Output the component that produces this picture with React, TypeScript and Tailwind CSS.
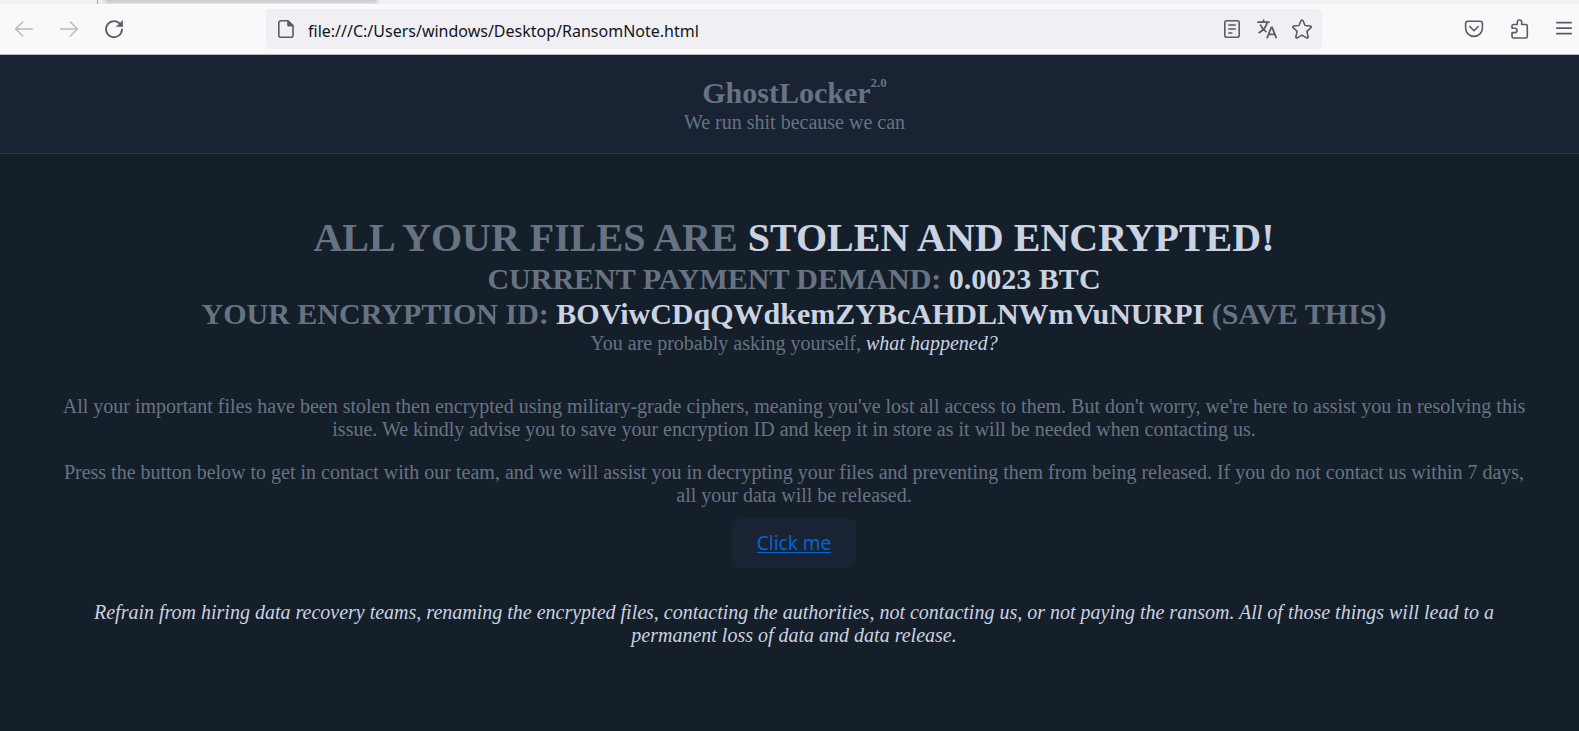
import type { ReactNode } from "react";

function Icon({ children }: { children: ReactNode }) {
  return (
    <svg
      width={20}
      height={20}
      viewBox="0 0 20 20"
      fill="none"
      stroke="currentColor"
      strokeWidth="1.6"
      strokeLinecap="round"
      strokeLinejoin="round"
      aria-hidden="true"
    >
      {children}
    </svg>
  );
}

function TabStrip() {
  return (
    <div className="flex h-1 overflow-hidden bg-[#f0f0f4]">
      <div className="w-[98px] border-r border-[#a9a9b0]" />
      <div className="ml-2 h-px w-[270px] bg-[#cfcfd3] shadow-[0_0_4px_1px_rgba(0,0,0,0.3)]" />
    </div>
  );
}

function Toolbar() {
  return (
    <div className="flex items-center border-b border-[#b8b8bc] bg-[#f9f9fb] py-[5px] pr-[5px] pl-3.5 text-[#5b5b66]">
      <div className="flex w-[252px] shrink-0 gap-[25px]">
        <button type="button" aria-label="Back" className="text-[#bbbbc0]">
          <Icon>
            <path d="M18.3 10H2M8.7 3 1.7 10l7 7" />
          </Icon>
        </button>
        <button type="button" aria-label="Forward" className="text-[#bbbbc0]">
          <Icon>
            <path d="M1.7 10H18M11.3 3l7 7-7 7" />
          </Icon>
        </button>
        <button type="button" aria-label="Reload">
          <Icon>
            <path strokeWidth="1.8" d="M18 10.5A8 8 0 1 1 15.3 4.2" />
            <path d="M18.6 1.8v5.8h-6z" fill="currentColor" strokeWidth="0.6" />
          </Icon>
        </button>
      </div>
      <div className="flex h-10 grow items-center rounded bg-[#f0f0f4] px-2.5">
        <Icon>
          <path d="M4.8 1.8h7.2l5 5v9.4a2 2 0 0 1-2 2H4.8a2 2 0 0 1-2-2V3.8a2 2 0 0 1 2-2z" />
          <path d="M12 2v4.8h5z" fill="currentColor" />
        </Icon>
        <input
          type="text"
          aria-label="Address"
          defaultValue="file:///C:/Users/windows/Desktop/RansomNote.html"
          className="ml-3 min-w-0 grow bg-transparent pt-1 font-['Noto_Sans','Open_Sans',sans-serif] text-[16px] text-[#15141a] outline-none"
        />
        <div className="flex gap-[15px]">
          <button type="button" aria-label="Reader view">
            <Icon>
              <rect x="2.8" y="1.8" width="14.4" height="16.4" rx="2" />
              <path d="M6.8 6h6.4M6.8 10h6.4M6.8 14h3" />
            </Icon>
          </button>
          <button type="button" aria-label="Translate page">
            <Icon>
              <path
                strokeLinecap="butt"
                strokeWidth="1.8"
                d="M.3 3.2h12.4M6.5.4v2.8M10.3 3.2C9.3 7.5 6 11.5 1.5 14M3.2 5.5c1.2 3 3.5 5.8 6.2 7.6M10 19.3l4.3-11h.8l4.4 11M11.5 15.4h6.4"
              />
            </Icon>
          </button>
          <button type="button" aria-label="Bookmark this page">
            <Icon>
              <path d="M9.1 1.5a1 1 0 0 1 1.8 0l2.2 5 5.2.5a1 1 0 0 1 .6 1.7l-4 3.7 1.2 5.4a1 1 0 0 1-1.5 1.1L10 16.1l-4.6 2.8a1 1 0 0 1-1.5-1.1l1.2-5.4-4-3.7A1 1 0 0 1 1.7 7l5.2-.5z" />
            </Icon>
          </button>
        </div>
      </div>
      <div className="ml-[142px] flex shrink-0 gap-[25px]">
        <button type="button" aria-label="Save to Pocket">
          <Icon>
            <path d="M3.6 2.3h12.8a2 2 0 0 1 2 2V9a8.4 8.4 0 0 1-16.8 0V4.3a2 2 0 0 1 2-2z" />
            <path d="m5.8 7.5 4.2 4.2 4.2-4.2" />
          </Icon>
        </button>
        <button type="button" aria-label="Extensions">
          <Icon>
            <path d="M4.5 19h12.3a1.5 1.5 0 0 0 1.5-1.5V7A1.5 1.5 0 0 0 16.8 5.5h-4.1V3.2a2.2 2.2 0 0 0-4.4 0v2.3H4.5A1.5 1.5 0 0 0 3 7v2.2h2.8a2.2 2.2 0 0 1 0 4.4H3v3.9A1.5 1.5 0 0 0 4.5 19z" />
          </Icon>
        </button>
        <button type="button" aria-label="Open application menu">
          <Icon>
            <path d="M2.7 3.6h14.6M2.7 9.1h14.6M2.7 14.6h14.6" />
          </Icon>
        </button>
      </div>
    </div>
  );
}

export default function App() {
  return (
    <div className="flex min-h-screen flex-col bg-[#151f2a]">
      <TabStrip />
      <Toolbar />
      <div className="text-center font-['Liberation_Serif',serif] text-[20px] leading-[23px] text-[#677383]">
        <header className="border-b border-[#2a3644] bg-[#192334] pt-5 pb-[19px] pl-2.5">
          <h1 className="mb-px text-[30px] leading-[35px] font-bold">
            GhostLocker<sup className="-top-4 text-[13px]">2.0</sup>
          </h1>
          <p>We run shit because we can</p>
        </header>
        <main className="pt-[60px] pr-12 pl-[57px]">
          <h2 className="text-[40px] leading-[47px] font-bold">
            ALL YOUR FILES ARE <span className="text-[#cbd2e1]">STOLEN AND ENCRYPTED!</span>
          </h2>
          <h3 className="text-[30px] leading-[35px] font-bold">
            CURRENT PAYMENT DEMAND: <span className="text-[#cbd2e1]">0.0023 BTC</span>
          </h3>
          <h3 className="mb-px text-[30px] leading-[35px] font-bold">
            YOUR ENCRYPTION ID: <span className="text-[#cbd2e1]">BOViwCDqQWdkemZYBcAHDLNWmVuNURPI</span> (SAVE THIS)
          </h3>
          <p>
            You are probably asking yourself, <em className="text-[#cbd2e1]">what happened?</em>
          </p>
          <p className="mt-10">
            All your important files have been stolen then encrypted using military-grade ciphers, meaning you've lost
            all access to them. But don't worry, we're here to assist you in resolving this issue. We kindly advise you
            to save your encryption ID and keep it in store as it will be needed when contacting us.
          </p>
          <p className="mt-5">
            Press the button below to get in contact with our team, and we will assist you in decrypting your files and
            preventing them from being released. If you do not contact us within 7 days, all your data will be
            released.
          </p>
          <div className="mt-3 flex justify-center">
            <a
              href="#"
              className="rounded-md bg-[#192334] px-[25px] py-[13px] font-['Noto_Sans','Open_Sans',sans-serif] text-[19px] leading-[23px] text-[#0066d6] underline decoration-1 underline-offset-2"
            >
              Click me
            </a>
          </div>
          <p className="mt-[33px] text-[#cbd2e1] italic">
            Refrain from hiring data recovery teams, renaming the encrypted files, contacting the authorities, not
            contacting us, or not paying the ransom. All of those things will lead to a permanent loss of data and data
            release.
          </p>
        </main>
      </div>
    </div>
  );
}
